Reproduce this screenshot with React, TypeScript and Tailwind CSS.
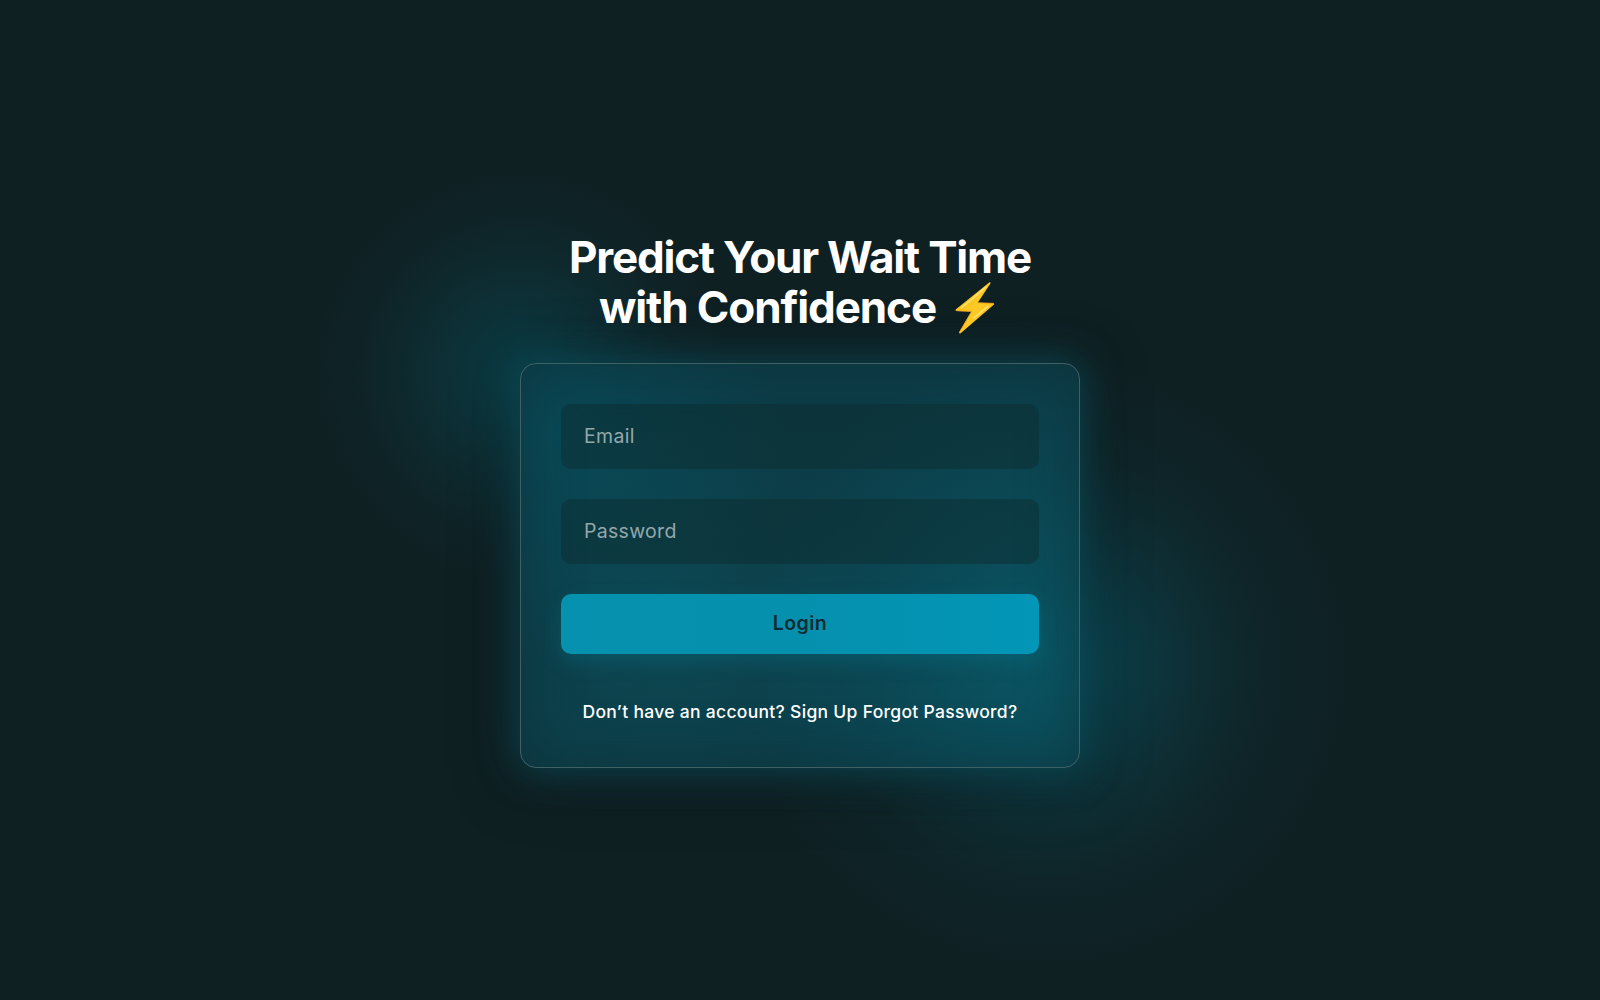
import React from "react";

function Bolt() {
  return (
    <svg className="h-[52px] w-10 shrink-0" viewBox="0 0 40 52">
      <defs>
        <linearGradient id="bolt" x1="0" y1="0" x2="1" y2="1">
          <stop offset="0" stopColor="#feb804" />
          <stop offset="0.5" stopColor="#ffca28" />
          <stop offset="1" stopColor="#feb804" />
        </linearGradient>
      </defs>
      <path d="M34.2.6 1 27.2c-.9.8-.4 1.8.6 1.8L16.6 29.4 4.2 50.2c-.4 1 .5 1.6 1.4 1L38.7 22.8c.8-.8.4-1.6-.6-1.6L22.7 20.8 35.4 1.6C36 .7 35-.1 34.2.6Z" fill="url(#bolt)" />
      <path d="M30.8 5.2 17.6 16.6 6.5 25.7M33 24.2 18.6 36.2" fill="none" stroke="#ffe36c" strokeWidth="1.6" strokeLinecap="round" />
      <path d="M22.7 20.8 38.6 21.4M1.2 28.6 16.6 29.4 4.6 50" fill="none" stroke="#f2a51c" strokeWidth="0.9" />
    </svg>
  );
}

const inputClass =
  "h-[65px] w-full shrink-0 rounded-[10px] bg-[#0e2a2c]/45 px-[23px] pb-[2px] text-[19.5px] tracking-[0.3px] text-white placeholder:text-[#93a8ac] outline-none";

export default function App() {
  return (
    <div className="relative flex h-[1000px] w-full flex-col items-center overflow-hidden bg-[#0f2023] pt-[232px] font-['Inter',sans-serif]">
      <div className="absolute top-[164px] left-[310px] h-[420px] w-[420px] rounded-full bg-[radial-gradient(closest-side,rgba(8,80,92,0.58),rgba(9,76,87,0.45)_25%,rgba(10,72,82,0.27)_50%,rgba(12,66,74,0.1)_75%,transparent)]" />
      <div className="absolute top-[355px] left-[737px] h-[620px] w-[620px] rounded-full bg-[radial-gradient(closest-side,rgba(8,90,106,0.7),rgba(9,84,99,0.56)_20%,rgba(11,76,88,0.34)_45%,rgba(12,68,76,0.12)_70%,transparent)]" />
      <h1 className="relative z-10 flex flex-col items-center text-[44px] leading-[50px] font-bold text-white">
        <span className="whitespace-nowrap tracking-[-1.2px]">Predict Your Wait Time</span>
        <span className="flex items-start whitespace-nowrap">
          <span className="tracking-[-1.1px]">with Confidence</span>
          <span className="ml-[19px] mr-[6px]"><Bolt /></span>
        </span>
      </h1>
      <div className="relative mt-[29px] flex h-[405px] w-[560px] shrink-0 flex-col rounded-[16px] border border-[#416064] bg-[#0c3c47] bg-[radial-gradient(circle_at_6%_18%,rgba(8,77,92,0.7),transparent_230px),radial-gradient(circle_at_94%_72%,rgba(9,95,111,0.7),transparent_300px),radial-gradient(circle_at_26%_66%,rgba(14,82,92,0.5),transparent_220px)] px-10 pt-10 shadow-[0_0_38px_2px_rgba(8,98,115,0.58),0_8px_62px_0_rgba(12,25,29,0.55),inset_0_0_56px_rgba(14,46,51,0.55)]">
        <input type="email" placeholder="Email" className={inputClass} />
        <input type="password" placeholder="Password" className={"mt-[30px] " + inputClass} />
        <button className="mt-[30px] h-[60px] w-full shrink-0 rounded-[10px] bg-gradient-to-r from-[#0691af] via-[#0590ae] to-[#0396b6] text-[19.5px] font-semibold tracking-[0.5px] text-[#0e2b33] shadow-[0_8px_20px_rgba(6,145,175,0.22)]">
          Login
        </button>
        <p className="mt-[46px] text-center text-[17.5px] leading-6 font-medium tracking-[0.3px] whitespace-nowrap text-white">
          Don’t have an account? <a>Sign Up</a> <a>Forgot Password?</a>
        </p>
      </div>
    </div>
  );
}
